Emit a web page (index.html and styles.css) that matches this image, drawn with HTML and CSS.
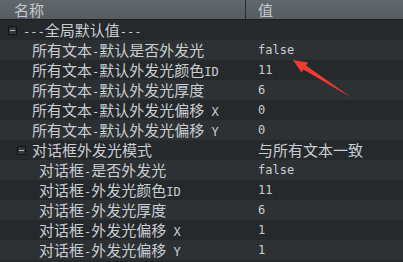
FILE: index.html
```html
<!DOCTYPE html>
<html lang="zh-CN">
<head>
    <meta charset="UTF-8">
    <title>属性</title>
    <link rel="stylesheet" href="styles.css">
</head>
<body>
    <div class="tree">
        <div class="head">
            <div class="name">名称</div>
            <div class="val">值</div>
        </div>

        <div class="row">
            <div class="name lv0"><span class="box"></span><span class="en">---</span>全局默认值<span class="en">---</span></div>
            <div class="val"></div>
        </div>
        <div class="row">
            <div class="name lv1">所有文本<span class="en">-</span>默认是否外发光</div>
            <div class="val en">false</div>
        </div>
        <div class="row">
            <div class="name lv1">所有文本<span class="en">-</span>默认外发光颜色<span class="en">ID</span></div>
            <div class="val en">11</div>
        </div>
        <div class="row">
            <div class="name lv1">所有文本<span class="en">-</span>默认外发光厚度</div>
            <div class="val en">6</div>
        </div>
        <div class="row">
            <div class="name lv1">所有文本<span class="en">-</span>默认外发光偏移<span class="en"> X</span></div>
            <div class="val en">0</div>
        </div>
        <div class="row">
            <div class="name lv1">所有文本<span class="en">-</span>默认外发光偏移<span class="en"> Y</span></div>
            <div class="val en">0</div>
        </div>
        <div class="row">
            <div class="name lv1b"><span class="box"></span>对话框外发光模式</div>
            <div class="val">与所有文本一致</div>
        </div>
        <div class="row">
            <div class="name lv2">对话框<span class="en">-</span>是否外发光</div>
            <div class="val en">false</div>
        </div>
        <div class="row">
            <div class="name lv2">对话框<span class="en">-</span>外发光颜色<span class="en">ID</span></div>
            <div class="val en">11</div>
        </div>
        <div class="row">
            <div class="name lv2">对话框<span class="en">-</span>外发光厚度</div>
            <div class="val en">6</div>
        </div>
        <div class="row">
            <div class="name lv2">对话框<span class="en">-</span>外发光偏移<span class="en"> X</span></div>
            <div class="val en">1</div>
        </div>
        <div class="row">
            <div class="name lv2">对话框<span class="en">-</span>外发光偏移<span class="en"> Y</span></div>
            <div class="val en">1</div>
        </div>
    </div>

    <!-- 标注箭头 -->
    <svg class="arrow" width="403" height="262" viewBox="0 0 403 262">
        <polygon points="352,98 306,65.4 308,62.5 293,60 301.6,72.5 303.4,69.6" fill="#ef3b30"/>
    </svg>
</body>
</html>
```

FILE: styles.css
```css
* {
    box-sizing: border-box;
}
body {
    margin: 0;
    background-color: #26292c;
    font-family: "Noto Sans CJK SC", sans-serif;
    font-size: 15px;
    color: #c9ced3;
}
.tree {
    width: 403px;
}
.head {
    display: flex;
    height: 20px;
    line-height: 19px;
    background: linear-gradient(#62676b, #575c60);
    border-bottom: 1px solid #1c1f21;
    color: #c3cad0;
}
.head .name {
    width: 246px;
    padding-left: 14px;
    border-right: 1px solid #2a2d30;
}
.head .val {
    padding-left: 12px;
}
.row {
    display: flex;
    height: 20px;
    line-height: 20px;
    white-space: nowrap;
}
.row:nth-child(odd) {
    background-color: #2d3134;
}
.row .name {
    width: 246px;
}
.row .val {
    padding-left: 12px;
}
.lv0 {
    padding-left: 8px;
}
.lv1 {
    padding-left: 32px;
}
.lv1b {
    padding-left: 17px;
}
.lv2 {
    padding-left: 39px;
}
.box {
    display: inline-block;
    vertical-align: 1px;
    width: 9px;
    height: 9px;
    margin-right: 6px;
    border: 1px solid #121416;
    background-color: #34383c;
    position: relative;
}
.box::after {
    content: "";
    position: absolute;
    left: 1px;
    right: 1px;
    top: 3px;
    height: 1px;
    background-color: #b8bec4;
}
.en {
    font-family: "DejaVu Sans Mono", monospace;
    font-size: 12px;
}
.arrow {
    position: absolute;
    left: 0;
    top: 0;
}
```
